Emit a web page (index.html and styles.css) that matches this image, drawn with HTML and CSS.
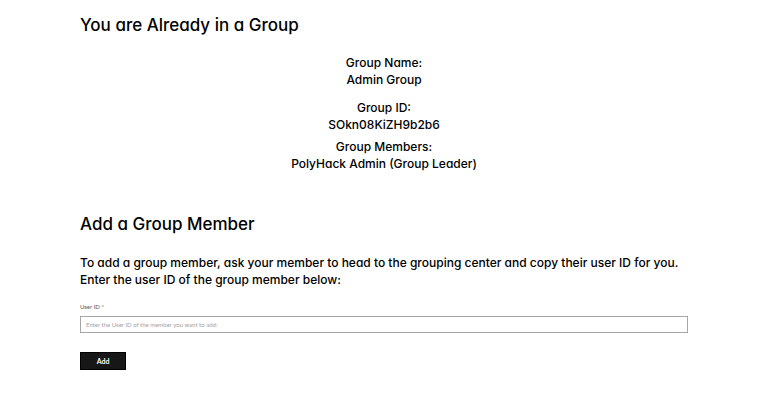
FILE: index.html
```html
<!DOCTYPE html>
<html lang="en">
<head>
<meta charset="utf-8">
<meta name="viewport" content="width=device-width, initial-scale=1">
<title>Group</title>
<link rel="stylesheet" href="styles.css">
</head>
<body>
<main class="page">
  <section class="group">
    <h1 class="title">You are Already in a Group</h1>
    <dl class="details">
      <div class="detail"><dt>Group Name:</dt><dd>Admin Group</dd></div>
      <div class="detail detail-id"><dt>Group ID:</dt><dd>SOkn08KiZH9b2b6</dd></div>
      <div class="detail detail-members"><dt>Group Members:</dt><dd>PolyHack Admin (Group Leader)</dd></div>
    </dl>
  </section>
  <section class="add">
    <h2 class="title">Add a Group Member</h2>
    <p class="intro">To add a group member, ask your member to head to the grouping center and copy their user ID for you.<br>Enter the user ID of the group member below:</p>
    <form class="form">
      <label class="label" for="user-id">User ID *</label>
      <input class="field" id="user-id" type="text" placeholder="Enter the User ID of the member you want to add:">
      <button class="button" type="button">Add</button>
    </form>
  </section>
</main>
</body>
</html>
```
FILE: styles.css
```css
* {
  box-sizing: border-box;
}

body {
  margin: 0;
  background: #fff;
  color: #000;
  font-family: Inter, sans-serif;
  font-feature-settings: "cv11";
}

.page {
  padding: 13px 80px 32px;
}

.title {
  margin: 0;
  font-size: 17px;
  font-weight: 500;
  line-height: 24px;
}

.details {
  margin: 17px 0 0;
  font-size: 12px;
  font-weight: 500;
  line-height: 17px;
  text-align: center;
}

.detail dd {
  margin: 0;
}

.detail-id {
  margin-top: 11px;
}

.detail-members {
  margin-top: 5px;
}

.add {
  margin-top: 40px;
}

.intro {
  margin: 18px 0 0;
  font-size: 12px;
  font-weight: 500;
  line-height: 17px;
}

.form {
  display: flex;
  flex-direction: column;
  align-items: flex-start;
  margin-top: 14px;
}

.label {
  color: #555;
  font-family: Lato, sans-serif;
  font-size: 6px;
  line-height: 10px;
}

.field {
  width: 100%;
  height: 17px;
  margin-top: 4px;
  padding: 0 5px;
  border: 1px solid #a6a6a6;
  border-radius: 0;
  background: #fff;
  color: #111;
  font-family: Lato, sans-serif;
  font-size: 6px;
}

.field::placeholder {
  color: #a3a3a3;
  opacity: 1;
}

.button {
  width: 46px;
  height: 18px;
  margin-top: 19px;
  padding: 0;
  border: 1px solid #000;
  background: #171717;
  color: #fff;
  font-family: Lato, sans-serif;
  font-size: 7px;
  font-weight: 700;
}
```
